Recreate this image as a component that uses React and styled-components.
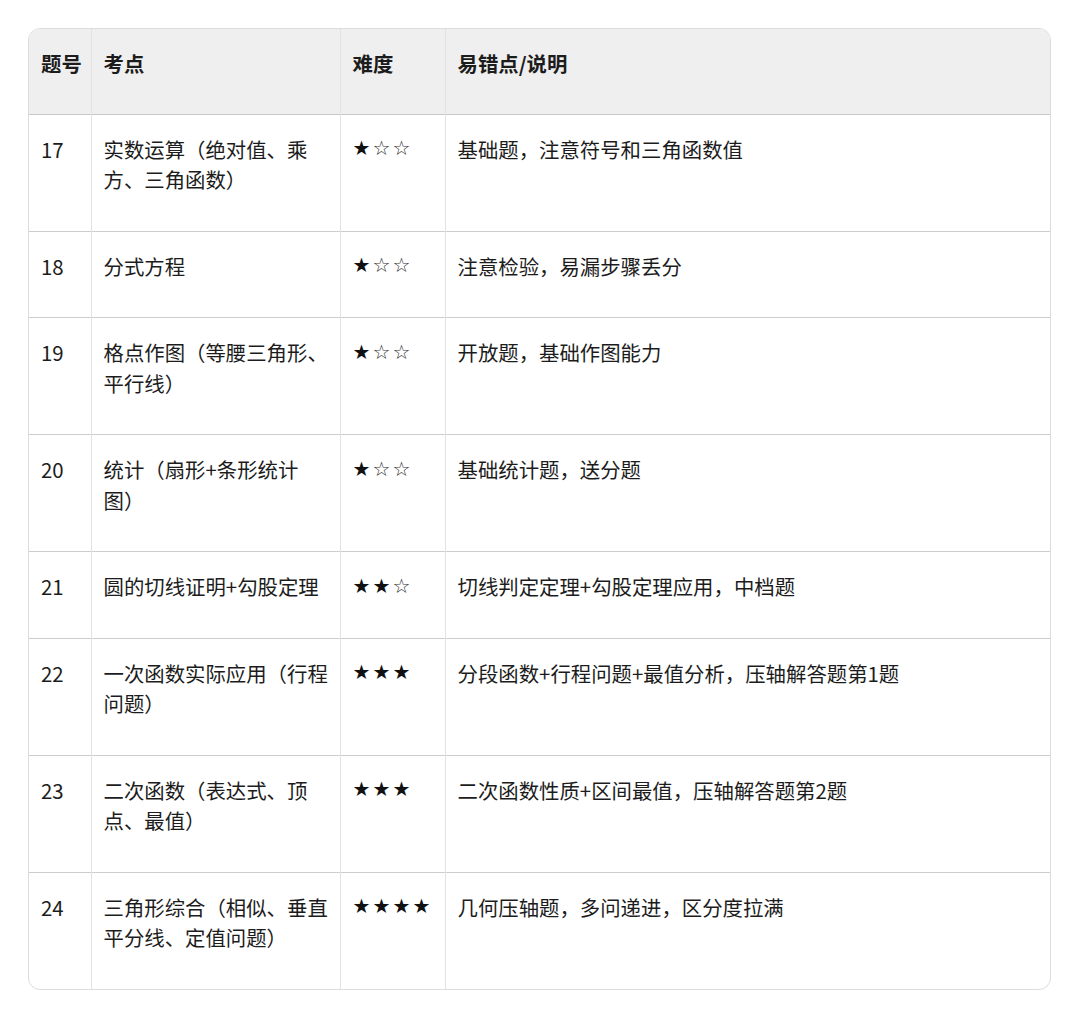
import React from 'react';
import styled, { createGlobalStyle } from 'styled-components';

const GlobalStyle = createGlobalStyle`
  html, body {
    margin: 0;
    padding: 0;
    background: #ffffff;
  }
  body {
    font-family: "Noto Sans CJK SC", "Noto Sans", sans-serif;
    color: #1c1c1c;
  }
`;

const Page = styled.div`
  padding: 28px 29px 28px 28px;
`;

const Card = styled.div`
  border: 1px solid #dcdcdc;
  border-radius: 12px;
  overflow: hidden;
  background: #ffffff;
`;

const Table = styled.table`
  width: 100%;
  border-collapse: collapse;
  table-layout: fixed;
  font-size: 20.4px;
  line-height: 30.5px;
  text-spacing-trim: space-all;
`;

const HeadRow = styled.tr`
  background: #efefef;
  border-bottom: 1px solid #c9c9c9;
`;

const Row = styled.tr`
  border-top: 1px solid #cdcdcd;

  &:first-child {
    border-top: none;
  }
`;

const Th = styled.th`
  text-align: left;
  font-weight: 700;
  padding: 19px 4px 35px 12px;
  vertical-align: top;
  border-left: 1px solid #e2e2e2;
  white-space: nowrap;

  &:first-child {
    border-left: none;
  }
`;

const Td = styled.td`
  padding: 19px 8px 36px 12px;
  vertical-align: top;
  border-left: 1px solid #e2e2e2;
  font-weight: 400;

  &:first-child {
    border-left: none;
  }
`;

const Stars = styled.div`
  display: flex;
  align-items: center;
  height: 29px;
  font-family: "DejaVu Sans", sans-serif;
  font-size: 20px;
  line-height: 1;
`;

const Star = styled.span`
  display: inline-block;
  width: 20px;
  color: ${(p) => (p.$on ? '#111' : '#333')};
`;

const rows = [
  { no: '17', topic: '实数运算（绝对值、乘方、三角函数）', level: 1, total: 3, note: '基础题，注意符号和三角函数值' },
  { no: '18', topic: '分式方程', level: 1, total: 3, note: '注意检验，易漏步骤丢分' },
  { no: '19', topic: '格点作图（等腰三角形、平行线）', level: 1, total: 3, note: '开放题，基础作图能力' },
  { no: '20', topic: '统计（扇形+条形统计图）', level: 1, total: 3, note: '基础统计题，送分题' },
  { no: '21', topic: '圆的切线证明+勾股定理', level: 2, total: 3, note: '切线判定定理+勾股定理应用，中档题' },
  { no: '22', topic: '一次函数实际应用（行程问题）', level: 3, total: 3, note: '分段函数+行程问题+最值分析，压轴解答题第1题' },
  { no: '23', topic: '二次函数（表达式、顶点、最值）', level: 3, total: 3, note: '二次函数性质+区间最值，压轴解答题第2题' },
  { no: '24', topic: '三角形综合（相似、垂直平分线、定值问题）', level: 4, total: 4, note: '几何压轴题，多问递进，区分度拉满' },
];

const Rating = ({ level, total }) => (
  <Stars>
    {Array.from({ length: total }).map((_, i) => (
      <Star key={i} $on={i < level}>{i < level ? '★' : '☆'}</Star>
    ))}
  </Stars>
);

const App = () => (
  <>
    <GlobalStyle />
    <Page>
      <Card>
        <Table>
          <colgroup>
            <col style={{ width: 62 }} />
            <col style={{ width: 249 }} />
            <col style={{ width: 105 }} />
            <col />
          </colgroup>
          <thead>
            <HeadRow>
              <Th>题号</Th>
              <Th>考点</Th>
              <Th>难度</Th>
              <Th>易错点/说明</Th>
            </HeadRow>
          </thead>
          <tbody>
            {rows.map((r) => (
              <Row key={r.no}>
                <Td>{r.no}</Td>
                <Td>{r.topic}</Td>
                <Td><Rating level={r.level} total={r.total} /></Td>
                <Td>{r.note}</Td>
              </Row>
            ))}
          </tbody>
        </Table>
      </Card>
    </Page>
  </>
);

export default App;
